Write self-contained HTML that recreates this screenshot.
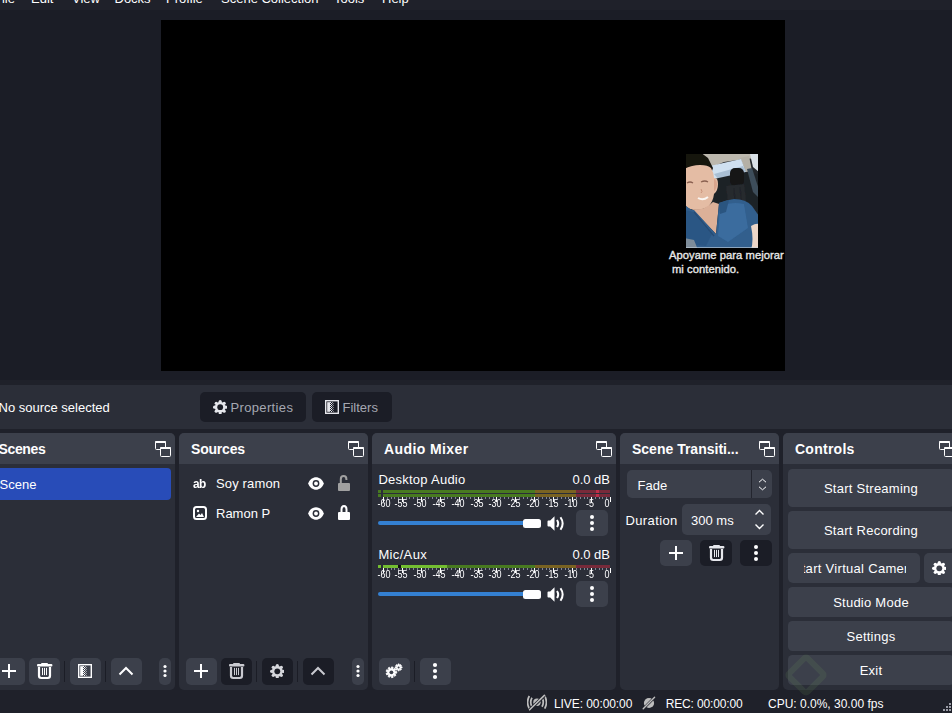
<!DOCTYPE html>
<html><head><meta charset="utf-8">
<style>
*{box-sizing:border-box;margin:0;padding:0}
html,body{width:952px;height:713px;overflow:hidden;background:#1f212a;font-family:"Liberation Sans",sans-serif;color:#fefeff;font-size:13px}
.a{position:absolute;display:block}
.t{position:absolute;white-space:pre;line-height:1}
</style></head><body>
<div class="t" style="left:-6px;top:-8px;">File</div>
<div class="t" style="left:31px;top:-8px;">Edit</div>
<div class="t" style="left:72px;top:-8px;">View</div>
<div class="t" style="left:114.5px;top:-8px;">Docks</div>
<div class="t" style="left:166px;top:-8px;">Profile</div>
<div class="t" style="left:221px;top:-8px;">Scene Collection</div>
<div class="t" style="left:334px;top:-8px;">Tools</div>
<div class="t" style="left:382px;top:-8px;">Help</div>
<div class="a" style="left:0px;top:10px;width:952px;height:370px;background:#1b1d26;"></div>
<div class="a" style="left:161px;top:20px;width:624px;height:351px;background:#000;"></div>
<svg class="a" style="left:686px;top:154px" width="72" height="95" viewBox="0 0 72 95"><defs><filter id="bl" x="-10%" y="-10%" width="120%" height="120%"><feGaussianBlur stdDeviation="0.65"/></filter><filter id="bl2" x="-20%" y="-20%" width="140%" height="140%"><feGaussianBlur stdDeviation="0.5"/></filter><clipPath id="pc"><rect x="0" y="0" width="72" height="94"/></clipPath></defs><g clip-path="url(#pc)"><rect x="0" y="0" width="72" height="94" fill="#22262a"/><g filter="url(#bl)"><path d="M8 -2H74V4L58 5L38 8L26 13L18 10Z" fill="#bcb8ae"/><path d="M54 4L63 2L66 17L60 18Z" fill="#b4b0a6"/><path d="M24 12L55 5L60 18L34 27L27 24Z" fill="#cfe0f0"/><path d="M28 20L57 12L60 18L34 27Z" fill="#a9bfd4"/><path d="M64 0H73V18L67 13Z" fill="#d9e0e6"/><path d="M28 25L60 18L73 20V80H28Z" fill="#1f2327"/><rect x="44" y="14" width="14" height="18" rx="5" fill="#141719"/><path d="M40 32L58 30L62 62L44 64Z" fill="#25292e"/><path d="M48 34L50 62M54 33L57 62" stroke="#20242a" stroke-width="1.2"/><path d="M61 15L66 14L73 36V44L67 38Z" fill="#3e4d5a"/><path d="M-2 -2H14L22 4L27 14L25 20L22 12L12 11L-2 16Z" fill="#16120e"/><path d="M-2 15Q6 11 14 11Q22 11 25 14Q28 19 28 24Q32 23 32 30Q32 37 28 40Q27 48 22 53Q14 57 4 55Q-2 52 -2 48Z" fill="#e4bca4"/><path d="M28 25Q31 26 31 31Q30 36 28 37Z" fill="#d8a48c"/><path d="M6 55Q18 57 27 48L33 50L30 80Z" fill="#dcb098"/><path d="M-2 50Q4 56 8 56L30 80L33 49Q40 46 48 45Q60 45 66 52L73 62V96H-2Z" fill="#305e8d"/><path d="M34 52Q46 47 58 50L62 74L42 88L32 82Z" fill="#3a6c9e"/><path d="M-2 56L8 58L26 80L20 92L-2 90Z" fill="#2c5784"/><path d="M33 49L43 46L40 58L34 60Z" fill="#2c5580"/><path d="M8 58L28 82" stroke="#284c74" stroke-width="1.2"/><path d="M65 72Q70 69 73 70V96H65Q68 86 65 72Z" fill="#ecd6c8"/><path d="M-2 84L8 86L12 96H-2Z" fill="#7d8c9a"/></g><g filter="url(#bl2)"><path d="M1 29Q4 27 7 29M15 28Q19 26 22 28" stroke="#8a6050" stroke-width="1.3" fill="none"/><path d="M12 44Q17 47 22 43" stroke="#fbf6f2" stroke-width="2" fill="none"/><path d="M15 35Q17 38 15 39" stroke="#c8927a" stroke-width="1" fill="none"/></g><rect x="0" y="93" width="72" height="1" fill="#c8d4e0" opacity="0.6"/></g></svg>
<div class="t" style="left:669px;top:250px;font-size:11.2px;color:#e8e8e8;-webkit-text-stroke:0.35px #e8e8e8;letter-spacing:0.05px">Apoyame para mejorar</div>
<div class="t" style="left:672px;top:263.5px;font-size:11.2px;color:#e8e8e8;-webkit-text-stroke:0.35px #e8e8e8;letter-spacing:0.05px">mi contenido.</div>
<div class="a" style="left:0px;top:385px;width:952px;height:44px;background:#2b2e38;"></div>
<div class="t" style="left:-1.5px;top:401px;">No source selected</div>
<div class="a" style="left:200px;top:392px;width:106px;height:30px;background:#1b1d26;border-radius:5px;"></div>
<div class="a" style="left:312px;top:392px;width:80px;height:30px;background:#1b1d26;border-radius:5px;"></div>
<svg class="a" style="left:212.8px;top:399.6px" width="14.4" height="14.4" viewBox="0 0 14.4 14.4"><circle cx="7.2" cy="7.2" r="5.40" fill="#e6e7ec"/><circle cx="12.82" cy="7.20" r="1.58" fill="#e6e7ec"/><circle cx="11.17" cy="11.17" r="1.58" fill="#e6e7ec"/><circle cx="7.20" cy="12.82" r="1.58" fill="#e6e7ec"/><circle cx="3.23" cy="11.17" r="1.58" fill="#e6e7ec"/><circle cx="1.58" cy="7.20" r="1.58" fill="#e6e7ec"/><circle cx="3.23" cy="3.23" r="1.58" fill="#e6e7ec"/><circle cx="7.20" cy="1.58" r="1.58" fill="#e6e7ec"/><circle cx="11.17" cy="3.23" r="1.58" fill="#e6e7ec"/><circle cx="7.2" cy="7.2" r="2.88" fill="#1b1d26"/></svg>
<div class="t" style="left:230.5px;top:401px;color:#a5a8b2;letter-spacing:0.35px">Properties</div>
<svg class="a" style="left:325px;top:400px" width="14" height="14" viewBox="0 0 14 14"><rect x="0.7" y="0.7" width="12.6" height="12.6" fill="none" stroke="#e6e7ec" stroke-width="1.4"/><rect x="2.2" y="2.2" width="2.8" height="9.6" fill="#e6e7ec"/><rect x="5" y="2" width="1" height="1" fill="#e6e7ec" opacity="1.0"/><rect x="7" y="2" width="1" height="1" fill="#e6e7ec" opacity="0.6"/><rect x="6" y="3" width="1" height="1" fill="#e6e7ec" opacity="1.0"/><rect x="8" y="3" width="1" height="1" fill="#e6e7ec" opacity="0.45"/><rect x="5" y="4" width="1" height="1" fill="#e6e7ec" opacity="1.0"/><rect x="7" y="4" width="1" height="1" fill="#e6e7ec" opacity="0.6"/><rect x="6" y="5" width="1" height="1" fill="#e6e7ec" opacity="1.0"/><rect x="8" y="5" width="1" height="1" fill="#e6e7ec" opacity="0.45"/><rect x="5" y="6" width="1" height="1" fill="#e6e7ec" opacity="1.0"/><rect x="7" y="6" width="1" height="1" fill="#e6e7ec" opacity="0.6"/><rect x="6" y="7" width="1" height="1" fill="#e6e7ec" opacity="1.0"/><rect x="8" y="7" width="1" height="1" fill="#e6e7ec" opacity="0.45"/><rect x="5" y="8" width="1" height="1" fill="#e6e7ec" opacity="1.0"/><rect x="7" y="8" width="1" height="1" fill="#e6e7ec" opacity="0.6"/><rect x="6" y="9" width="1" height="1" fill="#e6e7ec" opacity="1.0"/><rect x="8" y="9" width="1" height="1" fill="#e6e7ec" opacity="0.45"/><rect x="5" y="10" width="1" height="1" fill="#e6e7ec" opacity="1.0"/><rect x="7" y="10" width="1" height="1" fill="#e6e7ec" opacity="0.6"/><rect x="6" y="11" width="1" height="1" fill="#e6e7ec" opacity="1.0"/><rect x="8" y="11" width="1" height="1" fill="#e6e7ec" opacity="0.45"/></svg>
<div class="t" style="left:342.5px;top:401px;color:#a5a8b2;">Filters</div>
<div class="a" style="left:-12px;top:433px;width:187px;height:257px;background:#2b2e38;border-radius:5px;overflow:hidden"><div class="a" style="left:0;top:0;width:100%;height:31px;background:#3c404b"></div></div>
<div class="t" style="left:-1.5px;top:441.7px;font-size:14px;font-weight:700;letter-spacing:-0.35px">Scenes</div>
<svg class="a" style="left:155px;top:441px" width="17" height="17" viewBox="0 0 17 17"><rect x="0.5" y="0.5" width="10" height="8" rx="1" fill="none" stroke="#fefeff" stroke-width="1"/><rect x="0" y="0" width="11" height="2" rx="1" fill="#fefeff"/><rect x="5.5" y="6.5" width="10" height="9" rx="1" fill="#3c404b" stroke="#fefeff" stroke-width="1"/><rect x="5" y="6" width="11" height="2" rx="1" fill="#fefeff"/></svg>
<div class="a" style="left:179px;top:433px;width:189px;height:257px;background:#2b2e38;border-radius:5px;overflow:hidden"><div class="a" style="left:0;top:0;width:100%;height:31px;background:#3c404b"></div></div>
<div class="t" style="left:191px;top:441.7px;font-size:14px;font-weight:700;letter-spacing:-0.2px">Sources</div>
<svg class="a" style="left:348px;top:441px" width="17" height="17" viewBox="0 0 17 17"><rect x="0.5" y="0.5" width="10" height="8" rx="1" fill="none" stroke="#fefeff" stroke-width="1"/><rect x="0" y="0" width="11" height="2" rx="1" fill="#fefeff"/><rect x="5.5" y="6.5" width="10" height="9" rx="1" fill="#3c404b" stroke="#fefeff" stroke-width="1"/><rect x="5" y="6" width="11" height="2" rx="1" fill="#fefeff"/></svg>
<div class="a" style="left:372px;top:433px;width:244px;height:257px;background:#2b2e38;border-radius:5px;overflow:hidden"><div class="a" style="left:0;top:0;width:100%;height:31px;background:#3c404b"></div></div>
<div class="t" style="left:384px;top:441.7px;font-size:14px;font-weight:700;letter-spacing:0.4px">Audio Mixer</div>
<svg class="a" style="left:596px;top:441px" width="17" height="17" viewBox="0 0 17 17"><rect x="0.5" y="0.5" width="10" height="8" rx="1" fill="none" stroke="#fefeff" stroke-width="1"/><rect x="0" y="0" width="11" height="2" rx="1" fill="#fefeff"/><rect x="5.5" y="6.5" width="10" height="9" rx="1" fill="#3c404b" stroke="#fefeff" stroke-width="1"/><rect x="5" y="6" width="11" height="2" rx="1" fill="#fefeff"/></svg>
<div class="a" style="left:620px;top:433px;width:159px;height:257px;background:#2b2e38;border-radius:5px;overflow:hidden"><div class="a" style="left:0;top:0;width:100%;height:31px;background:#3c404b"></div></div>
<div class="t" style="left:632px;top:441.7px;font-size:14px;font-weight:700;letter-spacing:0px">Scene Transiti...</div>
<svg class="a" style="left:759px;top:441px" width="17" height="17" viewBox="0 0 17 17"><rect x="0.5" y="0.5" width="10" height="8" rx="1" fill="none" stroke="#fefeff" stroke-width="1"/><rect x="0" y="0" width="11" height="2" rx="1" fill="#fefeff"/><rect x="5.5" y="6.5" width="10" height="9" rx="1" fill="#3c404b" stroke="#fefeff" stroke-width="1"/><rect x="5" y="6" width="11" height="2" rx="1" fill="#fefeff"/></svg>
<div class="a" style="left:783px;top:433px;width:176px;height:257px;background:#2b2e38;border-radius:5px;overflow:hidden"><div class="a" style="left:0;top:0;width:100%;height:31px;background:#3c404b"></div></div>
<div class="t" style="left:795px;top:441.7px;font-size:14px;font-weight:700;letter-spacing:0.25px">Controls</div>
<svg class="a" style="left:939px;top:441px" width="17" height="17" viewBox="0 0 17 17"><rect x="0.5" y="0.5" width="10" height="8" rx="1" fill="none" stroke="#fefeff" stroke-width="1"/><rect x="0" y="0" width="11" height="2" rx="1" fill="#fefeff"/><rect x="5.5" y="6.5" width="10" height="9" rx="1" fill="#3c404b" stroke="#fefeff" stroke-width="1"/><rect x="5" y="6" width="11" height="2" rx="1" fill="#fefeff"/></svg>
<div class="a" style="left:-8px;top:468px;width:179px;height:32px;background:#284cb8;border-radius:4px;"></div>
<div class="t" style="left:-0.5px;top:478px;">Scene</div>
<div class="a" style="left:-6px;top:658px;width:31px;height:27px;background:#3c404b;border-radius:5px;"></div>
<svg class="a" style="left:2px;top:664px" width="14" height="14" viewBox="0 0 14 14"><path d="M7 0V14M0 7H14" stroke="#fefeff" stroke-width="2"/></svg>
<div class="a" style="left:29px;top:658px;width:31px;height:27px;background:#3c404b;border-radius:5px;"></div>
<svg class="a" style="left:37px;top:663px" width="16" height="17" viewBox="0 0 16 17"><rect x="4" y="0" width="7" height="2" rx="1" fill="#fefeff"/><rect x="0" y="1" width="15.4" height="2.4" rx="1" fill="#fefeff"/><path d="M2 4V12.8Q2 15 4.2 15H10.8Q13 15 13 12.8V4" fill="none" stroke="#fefeff" stroke-width="2.2"/><path d="M5.5 4.9V12.1M7.5 4.9V12.1M9.5 4.9V12.1" stroke="#fefeff" stroke-width="1"/></svg>
<div class="a" style="left:64px;top:661px;width:1px;height:21px;background:#1b1d26;"></div>
<div class="a" style="left:70px;top:658px;width:31px;height:27px;background:#3c404b;border-radius:5px;"></div>
<svg class="a" style="left:78px;top:664px" width="14" height="14" viewBox="0 0 14 14"><rect x="0.7" y="0.7" width="12.6" height="12.6" fill="none" stroke="#fefeff" stroke-width="1.4"/><rect x="2.2" y="2.2" width="2.8" height="9.6" fill="#fefeff"/><rect x="5" y="2" width="1" height="1" fill="#fefeff" opacity="1.0"/><rect x="7" y="2" width="1" height="1" fill="#fefeff" opacity="0.6"/><rect x="6" y="3" width="1" height="1" fill="#fefeff" opacity="1.0"/><rect x="8" y="3" width="1" height="1" fill="#fefeff" opacity="0.45"/><rect x="5" y="4" width="1" height="1" fill="#fefeff" opacity="1.0"/><rect x="7" y="4" width="1" height="1" fill="#fefeff" opacity="0.6"/><rect x="6" y="5" width="1" height="1" fill="#fefeff" opacity="1.0"/><rect x="8" y="5" width="1" height="1" fill="#fefeff" opacity="0.45"/><rect x="5" y="6" width="1" height="1" fill="#fefeff" opacity="1.0"/><rect x="7" y="6" width="1" height="1" fill="#fefeff" opacity="0.6"/><rect x="6" y="7" width="1" height="1" fill="#fefeff" opacity="1.0"/><rect x="8" y="7" width="1" height="1" fill="#fefeff" opacity="0.45"/><rect x="5" y="8" width="1" height="1" fill="#fefeff" opacity="1.0"/><rect x="7" y="8" width="1" height="1" fill="#fefeff" opacity="0.6"/><rect x="6" y="9" width="1" height="1" fill="#fefeff" opacity="1.0"/><rect x="8" y="9" width="1" height="1" fill="#fefeff" opacity="0.45"/><rect x="5" y="10" width="1" height="1" fill="#fefeff" opacity="1.0"/><rect x="7" y="10" width="1" height="1" fill="#fefeff" opacity="0.6"/><rect x="6" y="11" width="1" height="1" fill="#fefeff" opacity="1.0"/><rect x="8" y="11" width="1" height="1" fill="#fefeff" opacity="0.45"/></svg>
<div class="a" style="left:105px;top:661px;width:1px;height:21px;background:#1b1d26;"></div>
<div class="a" style="left:111px;top:658px;width:31px;height:27px;background:#3c404b;border-radius:5px;"></div>
<svg class="a" style="left:118px;top:666px" width="16" height="10" viewBox="0 0 16 10"><path d="M1.5 8.5L8 2L14.5 8.5" fill="none" stroke="#fefeff" stroke-width="2"/></svg>
<div class="a" style="left:159px;top:658px;width:12px;height:27px;background:#3c404b;border-radius:5px;"></div>
<svg class="a" style="left:161px;top:661px" width="8" height="20" viewBox="0 0 8 20"><circle cx="4" cy="5.5" r="1.6" fill="#fefeff"/><circle cx="4" cy="10.0" r="1.6" fill="#fefeff"/><circle cx="4" cy="14.5" r="1.6" fill="#fefeff"/></svg>
<div class="t" style="left:192.6px;top:477.6px;font-size:12.5px;font-weight:700;letter-spacing:-0.6px;transform:scaleX(0.95);transform-origin:0 0">ab</div>
<div class="t" style="left:216px;top:477px;letter-spacing:0.15px">Soy ramon</div>
<svg class="a" style="left:308px;top:476.5px" width="16" height="13" viewBox="0 0 16 13"><path d="M0.2 6.5C3 -1.8 13 -1.8 15.8 6.5C13 14.8 3 14.8 0.2 6.5Z" fill="#fefeff"/><circle cx="8" cy="6.5" r="3.4" fill="#2b2e38"/><circle cx="8" cy="6.5" r="1.9" fill="#fefeff"/></svg>
<svg class="a" style="left:338px;top:475px" width="12" height="16" viewBox="0 0 12 16"><path d="M2.8 8V4.2Q2.8 1 5.6 1Q8.4 1 8.4 4.2V5" fill="none" stroke="#a0a0a0" stroke-width="2"/><rect x="0" y="8" width="12" height="8" rx="1" fill="#a0a0a0"/></svg>
<svg class="a" style="left:193px;top:506px" width="14" height="14" viewBox="0 0 14 14"><rect x="1" y="1" width="12" height="12" rx="2.5" fill="none" stroke="#fefeff" stroke-width="2"/><circle cx="5" cy="5" r="1.2" fill="#fefeff"/><path d="M3 11L6 7.5L7.5 9L9 7L11 11Z" fill="#fefeff"/></svg>
<div class="t" style="left:216px;top:507px;">Ramon P</div>
<svg class="a" style="left:308px;top:506.5px" width="16" height="13" viewBox="0 0 16 13"><path d="M0.2 6.5C3 -1.8 13 -1.8 15.8 6.5C13 14.8 3 14.8 0.2 6.5Z" fill="#fefeff"/><circle cx="8" cy="6.5" r="3.4" fill="#2b2e38"/><circle cx="8" cy="6.5" r="1.9" fill="#fefeff"/></svg>
<svg class="a" style="left:338px;top:505px" width="12" height="16" viewBox="0 0 12 16"><path d="M3.5 7V4.5Q3.5 1 6 1Q8.5 1 8.5 4.5V7" fill="none" stroke="#fefeff" stroke-width="2"/><rect x="0" y="7" width="12" height="8" rx="1" fill="#fefeff"/></svg>
<div class="a" style="left:186px;top:658px;width:31px;height:27px;background:#3c404b;border-radius:5px;"></div>
<svg class="a" style="left:194px;top:664px" width="14" height="14" viewBox="0 0 14 14"><path d="M7 0V14M0 7H14" stroke="#fefeff" stroke-width="2"/></svg>
<div class="a" style="left:221px;top:658px;width:31px;height:27px;background:#1b1d26;border-radius:5px;"></div>
<svg class="a" style="left:229px;top:663px" width="16" height="17" viewBox="0 0 16 17"><rect x="4" y="0" width="7" height="2" rx="1" fill="#c9cad0"/><rect x="0" y="1" width="15.4" height="2.4" rx="1" fill="#c9cad0"/><path d="M2 4V12.8Q2 15 4.2 15H10.8Q13 15 13 12.8V4" fill="none" stroke="#c9cad0" stroke-width="2.2"/><path d="M5.5 4.9V12.1M7.5 4.9V12.1M9.5 4.9V12.1" stroke="#c9cad0" stroke-width="1"/></svg>
<div class="a" style="left:256px;top:661px;width:1px;height:21px;background:#1b1d26;"></div>
<div class="a" style="left:262px;top:658px;width:31px;height:27px;background:#1b1d26;border-radius:5px;"></div>
<svg class="a" style="left:269.7px;top:663.7px" width="14.6" height="14.6" viewBox="0 0 14.6 14.6"><circle cx="7.3" cy="7.3" r="5.47" fill="#d6d7dc"/><circle cx="12.99" cy="7.30" r="1.61" fill="#d6d7dc"/><circle cx="11.33" cy="11.33" r="1.61" fill="#d6d7dc"/><circle cx="7.30" cy="12.99" r="1.61" fill="#d6d7dc"/><circle cx="3.27" cy="11.33" r="1.61" fill="#d6d7dc"/><circle cx="1.61" cy="7.30" r="1.61" fill="#d6d7dc"/><circle cx="3.27" cy="3.27" r="1.61" fill="#d6d7dc"/><circle cx="7.30" cy="1.61" r="1.61" fill="#d6d7dc"/><circle cx="11.33" cy="3.27" r="1.61" fill="#d6d7dc"/><circle cx="7.3" cy="7.3" r="2.92" fill="#1b1d26"/></svg>
<div class="a" style="left:297px;top:661px;width:1px;height:21px;background:#1b1d26;"></div>
<div class="a" style="left:303px;top:658px;width:31px;height:27px;background:#1b1d26;border-radius:5px;"></div>
<svg class="a" style="left:310px;top:666px" width="16" height="10" viewBox="0 0 16 10"><path d="M1.5 8.5L8 2L14.5 8.5" fill="none" stroke="#c9cad0" stroke-width="2"/></svg>
<div class="a" style="left:352px;top:658px;width:12px;height:27px;background:#3c404b;border-radius:5px;"></div>
<svg class="a" style="left:354px;top:661px" width="8" height="20" viewBox="0 0 8 20"><circle cx="4" cy="5.5" r="1.6" fill="#fefeff"/><circle cx="4" cy="10.0" r="1.6" fill="#fefeff"/><circle cx="4" cy="14.5" r="1.6" fill="#fefeff"/></svg>
<div class="t" style="left:378.4px;top:473px;letter-spacing:0.25px">Desktop Audio</div>
<div class="t" style="left:510px;top:473px;width:100px;text-align:right">0.0 dB</div>
<div class="a" style="left:378px;top:490px;width:3px;height:3px;background:#487a20;"></div>
<div class="a" style="left:383px;top:490px;width:152px;height:3px;background:#487a20;"></div>
<div class="a" style="left:535px;top:490px;width:41px;height:3px;background:#7a6322;"></div>
<div class="a" style="left:576px;top:490px;width:34px;height:3px;background:#782a3a;"></div>
<div class="a" style="left:596px;top:490px;width:3px;height:3px;background:#bd2f49;"></div>
<div class="a" style="left:378px;top:494px;width:3px;height:3px;background:#487a20;"></div>
<div class="a" style="left:383px;top:494px;width:152px;height:3px;background:#487a20;"></div>
<div class="a" style="left:535px;top:494px;width:41px;height:3px;background:#7a6322;"></div>
<div class="a" style="left:576px;top:494px;width:34px;height:3px;background:#782a3a;"></div>
<div class="a" style="left:596px;top:494px;width:3px;height:3px;background:#bd2f49;"></div>
<div class="a" style="left:383px;top:497px;width:1px;height:2px;background:#85889a;"></div>
<div class="a" style="left:387px;top:497px;width:1px;height:2px;background:#85889a;"></div>
<div class="a" style="left:391px;top:497px;width:1px;height:2px;background:#85889a;"></div>
<div class="a" style="left:394px;top:497px;width:1px;height:2px;background:#85889a;"></div>
<div class="a" style="left:398px;top:497px;width:1px;height:2px;background:#85889a;"></div>
<div class="a" style="left:402px;top:497px;width:1px;height:2px;background:#85889a;"></div>
<div class="a" style="left:406px;top:497px;width:1px;height:2px;background:#85889a;"></div>
<div class="a" style="left:409px;top:497px;width:1px;height:2px;background:#85889a;"></div>
<div class="a" style="left:413px;top:497px;width:1px;height:2px;background:#85889a;"></div>
<div class="a" style="left:417px;top:497px;width:1px;height:2px;background:#85889a;"></div>
<div class="a" style="left:421px;top:497px;width:1px;height:2px;background:#85889a;"></div>
<div class="a" style="left:425px;top:497px;width:1px;height:2px;background:#85889a;"></div>
<div class="a" style="left:428px;top:497px;width:1px;height:2px;background:#85889a;"></div>
<div class="a" style="left:432px;top:497px;width:1px;height:2px;background:#85889a;"></div>
<div class="a" style="left:436px;top:497px;width:1px;height:2px;background:#85889a;"></div>
<div class="a" style="left:440px;top:497px;width:1px;height:2px;background:#85889a;"></div>
<div class="a" style="left:444px;top:497px;width:1px;height:2px;background:#85889a;"></div>
<div class="a" style="left:447px;top:497px;width:1px;height:2px;background:#85889a;"></div>
<div class="a" style="left:451px;top:497px;width:1px;height:2px;background:#85889a;"></div>
<div class="a" style="left:455px;top:497px;width:1px;height:2px;background:#85889a;"></div>
<div class="a" style="left:459px;top:497px;width:1px;height:2px;background:#85889a;"></div>
<div class="a" style="left:462px;top:497px;width:1px;height:2px;background:#85889a;"></div>
<div class="a" style="left:466px;top:497px;width:1px;height:2px;background:#85889a;"></div>
<div class="a" style="left:470px;top:497px;width:1px;height:2px;background:#85889a;"></div>
<div class="a" style="left:474px;top:497px;width:1px;height:2px;background:#85889a;"></div>
<div class="a" style="left:478px;top:497px;width:1px;height:2px;background:#85889a;"></div>
<div class="a" style="left:481px;top:497px;width:1px;height:2px;background:#85889a;"></div>
<div class="a" style="left:485px;top:497px;width:1px;height:2px;background:#85889a;"></div>
<div class="a" style="left:489px;top:497px;width:1px;height:2px;background:#85889a;"></div>
<div class="a" style="left:493px;top:497px;width:1px;height:2px;background:#85889a;"></div>
<div class="a" style="left:496px;top:497px;width:1px;height:2px;background:#85889a;"></div>
<div class="a" style="left:500px;top:497px;width:1px;height:2px;background:#85889a;"></div>
<div class="a" style="left:504px;top:497px;width:1px;height:2px;background:#85889a;"></div>
<div class="a" style="left:508px;top:497px;width:1px;height:2px;background:#85889a;"></div>
<div class="a" style="left:512px;top:497px;width:1px;height:2px;background:#85889a;"></div>
<div class="a" style="left:515px;top:497px;width:1px;height:2px;background:#85889a;"></div>
<div class="a" style="left:519px;top:497px;width:1px;height:2px;background:#85889a;"></div>
<div class="a" style="left:523px;top:497px;width:1px;height:2px;background:#85889a;"></div>
<div class="a" style="left:527px;top:497px;width:1px;height:2px;background:#85889a;"></div>
<div class="a" style="left:531px;top:497px;width:1px;height:2px;background:#85889a;"></div>
<div class="a" style="left:534px;top:497px;width:1px;height:2px;background:#85889a;"></div>
<div class="a" style="left:538px;top:497px;width:1px;height:2px;background:#85889a;"></div>
<div class="a" style="left:542px;top:497px;width:1px;height:2px;background:#85889a;"></div>
<div class="a" style="left:546px;top:497px;width:1px;height:2px;background:#85889a;"></div>
<div class="a" style="left:549px;top:497px;width:1px;height:2px;background:#85889a;"></div>
<div class="a" style="left:553px;top:497px;width:1px;height:2px;background:#85889a;"></div>
<div class="a" style="left:557px;top:497px;width:1px;height:2px;background:#85889a;"></div>
<div class="a" style="left:561px;top:497px;width:1px;height:2px;background:#85889a;"></div>
<div class="a" style="left:565px;top:497px;width:1px;height:2px;background:#85889a;"></div>
<div class="a" style="left:568px;top:497px;width:1px;height:2px;background:#85889a;"></div>
<div class="a" style="left:572px;top:497px;width:1px;height:2px;background:#85889a;"></div>
<div class="a" style="left:576px;top:497px;width:1px;height:2px;background:#85889a;"></div>
<div class="a" style="left:580px;top:497px;width:1px;height:2px;background:#85889a;"></div>
<div class="a" style="left:584px;top:497px;width:1px;height:2px;background:#85889a;"></div>
<div class="a" style="left:587px;top:497px;width:1px;height:2px;background:#85889a;"></div>
<div class="a" style="left:591px;top:497px;width:1px;height:2px;background:#85889a;"></div>
<div class="a" style="left:595px;top:497px;width:1px;height:2px;background:#85889a;"></div>
<div class="a" style="left:599px;top:497px;width:1px;height:2px;background:#85889a;"></div>
<div class="a" style="left:602px;top:497px;width:1px;height:2px;background:#85889a;"></div>
<div class="a" style="left:606px;top:497px;width:1px;height:2px;background:#85889a;"></div>
<div class="a" style="left:610px;top:497px;width:1px;height:2px;background:#85889a;"></div>
<div class="a" style="left:383px;top:497px;width:1px;height:5px;background:#fefeff;"></div>
<div class="t" style="left:373.8px;top:499px;width:20px;text-align:center;font-size:10px;transform:scaleX(0.9)">-60</div>
<div class="a" style="left:402px;top:497px;width:1px;height:5px;background:#fefeff;"></div>
<div class="t" style="left:391.4px;top:499px;width:20px;text-align:center;font-size:10px;transform:scaleX(0.9)">-55</div>
<div class="a" style="left:421px;top:497px;width:1px;height:5px;background:#fefeff;"></div>
<div class="t" style="left:410.4px;top:499px;width:20px;text-align:center;font-size:10px;transform:scaleX(0.9)">-50</div>
<div class="a" style="left:440px;top:497px;width:1px;height:5px;background:#fefeff;"></div>
<div class="t" style="left:429.4px;top:499px;width:20px;text-align:center;font-size:10px;transform:scaleX(0.9)">-45</div>
<div class="a" style="left:459px;top:497px;width:1px;height:5px;background:#fefeff;"></div>
<div class="t" style="left:448.4px;top:499px;width:20px;text-align:center;font-size:10px;transform:scaleX(0.9)">-40</div>
<div class="a" style="left:478px;top:497px;width:1px;height:5px;background:#fefeff;"></div>
<div class="t" style="left:467.4px;top:499px;width:20px;text-align:center;font-size:10px;transform:scaleX(0.9)">-35</div>
<div class="a" style="left:496px;top:497px;width:1px;height:5px;background:#fefeff;"></div>
<div class="t" style="left:485.4px;top:499px;width:20px;text-align:center;font-size:10px;transform:scaleX(0.9)">-30</div>
<div class="a" style="left:515px;top:497px;width:1px;height:5px;background:#fefeff;"></div>
<div class="t" style="left:504.4px;top:499px;width:20px;text-align:center;font-size:10px;transform:scaleX(0.9)">-25</div>
<div class="a" style="left:534px;top:497px;width:1px;height:5px;background:#fefeff;"></div>
<div class="t" style="left:523.4px;top:499px;width:20px;text-align:center;font-size:10px;transform:scaleX(0.9)">-20</div>
<div class="a" style="left:553px;top:497px;width:1px;height:5px;background:#fefeff;"></div>
<div class="t" style="left:542.4px;top:499px;width:20px;text-align:center;font-size:10px;transform:scaleX(0.9)">-15</div>
<div class="a" style="left:572px;top:497px;width:1px;height:5px;background:#fefeff;"></div>
<div class="t" style="left:561.4px;top:499px;width:20px;text-align:center;font-size:10px;transform:scaleX(0.9)">-10</div>
<div class="a" style="left:591px;top:497px;width:1px;height:5px;background:#fefeff;"></div>
<div class="t" style="left:580.4px;top:499px;width:20px;text-align:center;font-size:10px;transform:scaleX(0.9)">-5</div>
<div class="a" style="left:610px;top:497px;width:1px;height:5px;background:#fefeff;"></div>
<div class="t" style="left:596.5px;top:499px;width:20px;text-align:center;font-size:10px;transform:scaleX(0.9)">0</div>
<div class="a" style="left:378px;top:521px;width:150px;height:4px;background:#3480d2;border-radius:2px;"></div>
<div class="a" style="left:523px;top:518.5px;width:18px;height:9px;background:#fefeff;border-radius:2.5px;"></div>
<svg class="a" style="left:546.5px;top:515.8px" width="18" height="16" viewBox="0 0 18 16"><path d="M0.5 5.4Q0.5 4.5 1.4 4.5H3.2L7.5 0.3V14.7L3.2 10.5H1.4Q0.5 10.5 0.5 9.6Z" fill="#fefeff"/><path d="M10 4Q12.3 7.5 10 11" fill="none" stroke="#fefeff" stroke-width="2"/><path d="M13.5 1.3Q17.8 7.5 13.5 13.7" fill="none" stroke="#fefeff" stroke-width="2"/></svg>
<div class="a" style="left:576px;top:510px;width:32px;height:26px;background:#3c404b;border-radius:5px;"></div>
<svg class="a" style="left:588px;top:513px" width="8" height="20" viewBox="0 0 8 20"><circle cx="4" cy="4" r="2" fill="#fefeff"/><circle cx="4" cy="10" r="2" fill="#fefeff"/><circle cx="4" cy="16" r="2" fill="#fefeff"/></svg>
<div class="t" style="left:378.4px;top:548px;letter-spacing:0.35px">Mic/Aux</div>
<div class="t" style="left:510px;top:548px;width:100px;text-align:right">0.0 dB</div>
<div class="a" style="left:378px;top:565px;width:3px;height:3px;background:#487a20;"></div>
<div class="a" style="left:383px;top:565px;width:152px;height:3px;background:#487a20;"></div>
<div class="a" style="left:535px;top:565px;width:41px;height:3px;background:#7a6322;"></div>
<div class="a" style="left:576px;top:565px;width:34px;height:3px;background:#782a3a;"></div>
<div class="a" style="left:383px;top:565px;width:64px;height:3px;background:#73bd31;"></div>
<div class="a" style="left:378px;top:565px;width:3px;height:3px;background:#73bd31;"></div>
<div class="a" style="left:398px;top:565px;width:3px;height:3px;background:#111;"></div>
<div class="a" style="left:383px;top:568px;width:1px;height:2px;background:#85889a;"></div>
<div class="a" style="left:387px;top:568px;width:1px;height:2px;background:#85889a;"></div>
<div class="a" style="left:391px;top:568px;width:1px;height:2px;background:#85889a;"></div>
<div class="a" style="left:394px;top:568px;width:1px;height:2px;background:#85889a;"></div>
<div class="a" style="left:398px;top:568px;width:1px;height:2px;background:#85889a;"></div>
<div class="a" style="left:402px;top:568px;width:1px;height:2px;background:#85889a;"></div>
<div class="a" style="left:406px;top:568px;width:1px;height:2px;background:#85889a;"></div>
<div class="a" style="left:409px;top:568px;width:1px;height:2px;background:#85889a;"></div>
<div class="a" style="left:413px;top:568px;width:1px;height:2px;background:#85889a;"></div>
<div class="a" style="left:417px;top:568px;width:1px;height:2px;background:#85889a;"></div>
<div class="a" style="left:421px;top:568px;width:1px;height:2px;background:#85889a;"></div>
<div class="a" style="left:425px;top:568px;width:1px;height:2px;background:#85889a;"></div>
<div class="a" style="left:428px;top:568px;width:1px;height:2px;background:#85889a;"></div>
<div class="a" style="left:432px;top:568px;width:1px;height:2px;background:#85889a;"></div>
<div class="a" style="left:436px;top:568px;width:1px;height:2px;background:#85889a;"></div>
<div class="a" style="left:440px;top:568px;width:1px;height:2px;background:#85889a;"></div>
<div class="a" style="left:444px;top:568px;width:1px;height:2px;background:#85889a;"></div>
<div class="a" style="left:447px;top:568px;width:1px;height:2px;background:#85889a;"></div>
<div class="a" style="left:451px;top:568px;width:1px;height:2px;background:#85889a;"></div>
<div class="a" style="left:455px;top:568px;width:1px;height:2px;background:#85889a;"></div>
<div class="a" style="left:459px;top:568px;width:1px;height:2px;background:#85889a;"></div>
<div class="a" style="left:462px;top:568px;width:1px;height:2px;background:#85889a;"></div>
<div class="a" style="left:466px;top:568px;width:1px;height:2px;background:#85889a;"></div>
<div class="a" style="left:470px;top:568px;width:1px;height:2px;background:#85889a;"></div>
<div class="a" style="left:474px;top:568px;width:1px;height:2px;background:#85889a;"></div>
<div class="a" style="left:478px;top:568px;width:1px;height:2px;background:#85889a;"></div>
<div class="a" style="left:481px;top:568px;width:1px;height:2px;background:#85889a;"></div>
<div class="a" style="left:485px;top:568px;width:1px;height:2px;background:#85889a;"></div>
<div class="a" style="left:489px;top:568px;width:1px;height:2px;background:#85889a;"></div>
<div class="a" style="left:493px;top:568px;width:1px;height:2px;background:#85889a;"></div>
<div class="a" style="left:496px;top:568px;width:1px;height:2px;background:#85889a;"></div>
<div class="a" style="left:500px;top:568px;width:1px;height:2px;background:#85889a;"></div>
<div class="a" style="left:504px;top:568px;width:1px;height:2px;background:#85889a;"></div>
<div class="a" style="left:508px;top:568px;width:1px;height:2px;background:#85889a;"></div>
<div class="a" style="left:512px;top:568px;width:1px;height:2px;background:#85889a;"></div>
<div class="a" style="left:515px;top:568px;width:1px;height:2px;background:#85889a;"></div>
<div class="a" style="left:519px;top:568px;width:1px;height:2px;background:#85889a;"></div>
<div class="a" style="left:523px;top:568px;width:1px;height:2px;background:#85889a;"></div>
<div class="a" style="left:527px;top:568px;width:1px;height:2px;background:#85889a;"></div>
<div class="a" style="left:531px;top:568px;width:1px;height:2px;background:#85889a;"></div>
<div class="a" style="left:534px;top:568px;width:1px;height:2px;background:#85889a;"></div>
<div class="a" style="left:538px;top:568px;width:1px;height:2px;background:#85889a;"></div>
<div class="a" style="left:542px;top:568px;width:1px;height:2px;background:#85889a;"></div>
<div class="a" style="left:546px;top:568px;width:1px;height:2px;background:#85889a;"></div>
<div class="a" style="left:549px;top:568px;width:1px;height:2px;background:#85889a;"></div>
<div class="a" style="left:553px;top:568px;width:1px;height:2px;background:#85889a;"></div>
<div class="a" style="left:557px;top:568px;width:1px;height:2px;background:#85889a;"></div>
<div class="a" style="left:561px;top:568px;width:1px;height:2px;background:#85889a;"></div>
<div class="a" style="left:565px;top:568px;width:1px;height:2px;background:#85889a;"></div>
<div class="a" style="left:568px;top:568px;width:1px;height:2px;background:#85889a;"></div>
<div class="a" style="left:572px;top:568px;width:1px;height:2px;background:#85889a;"></div>
<div class="a" style="left:576px;top:568px;width:1px;height:2px;background:#85889a;"></div>
<div class="a" style="left:580px;top:568px;width:1px;height:2px;background:#85889a;"></div>
<div class="a" style="left:584px;top:568px;width:1px;height:2px;background:#85889a;"></div>
<div class="a" style="left:587px;top:568px;width:1px;height:2px;background:#85889a;"></div>
<div class="a" style="left:591px;top:568px;width:1px;height:2px;background:#85889a;"></div>
<div class="a" style="left:595px;top:568px;width:1px;height:2px;background:#85889a;"></div>
<div class="a" style="left:599px;top:568px;width:1px;height:2px;background:#85889a;"></div>
<div class="a" style="left:602px;top:568px;width:1px;height:2px;background:#85889a;"></div>
<div class="a" style="left:606px;top:568px;width:1px;height:2px;background:#85889a;"></div>
<div class="a" style="left:610px;top:568px;width:1px;height:2px;background:#85889a;"></div>
<div class="a" style="left:383px;top:568px;width:1px;height:5px;background:#fefeff;"></div>
<div class="t" style="left:373.8px;top:570px;width:20px;text-align:center;font-size:10px;transform:scaleX(0.9)">-60</div>
<div class="a" style="left:402px;top:568px;width:1px;height:5px;background:#fefeff;"></div>
<div class="t" style="left:391.4px;top:570px;width:20px;text-align:center;font-size:10px;transform:scaleX(0.9)">-55</div>
<div class="a" style="left:421px;top:568px;width:1px;height:5px;background:#fefeff;"></div>
<div class="t" style="left:410.4px;top:570px;width:20px;text-align:center;font-size:10px;transform:scaleX(0.9)">-50</div>
<div class="a" style="left:440px;top:568px;width:1px;height:5px;background:#fefeff;"></div>
<div class="t" style="left:429.4px;top:570px;width:20px;text-align:center;font-size:10px;transform:scaleX(0.9)">-45</div>
<div class="a" style="left:459px;top:568px;width:1px;height:5px;background:#fefeff;"></div>
<div class="t" style="left:448.4px;top:570px;width:20px;text-align:center;font-size:10px;transform:scaleX(0.9)">-40</div>
<div class="a" style="left:478px;top:568px;width:1px;height:5px;background:#fefeff;"></div>
<div class="t" style="left:467.4px;top:570px;width:20px;text-align:center;font-size:10px;transform:scaleX(0.9)">-35</div>
<div class="a" style="left:496px;top:568px;width:1px;height:5px;background:#fefeff;"></div>
<div class="t" style="left:485.4px;top:570px;width:20px;text-align:center;font-size:10px;transform:scaleX(0.9)">-30</div>
<div class="a" style="left:515px;top:568px;width:1px;height:5px;background:#fefeff;"></div>
<div class="t" style="left:504.4px;top:570px;width:20px;text-align:center;font-size:10px;transform:scaleX(0.9)">-25</div>
<div class="a" style="left:534px;top:568px;width:1px;height:5px;background:#fefeff;"></div>
<div class="t" style="left:523.4px;top:570px;width:20px;text-align:center;font-size:10px;transform:scaleX(0.9)">-20</div>
<div class="a" style="left:553px;top:568px;width:1px;height:5px;background:#fefeff;"></div>
<div class="t" style="left:542.4px;top:570px;width:20px;text-align:center;font-size:10px;transform:scaleX(0.9)">-15</div>
<div class="a" style="left:572px;top:568px;width:1px;height:5px;background:#fefeff;"></div>
<div class="t" style="left:561.4px;top:570px;width:20px;text-align:center;font-size:10px;transform:scaleX(0.9)">-10</div>
<div class="a" style="left:591px;top:568px;width:1px;height:5px;background:#fefeff;"></div>
<div class="t" style="left:580.4px;top:570px;width:20px;text-align:center;font-size:10px;transform:scaleX(0.9)">-5</div>
<div class="a" style="left:610px;top:568px;width:1px;height:5px;background:#fefeff;"></div>
<div class="t" style="left:596.5px;top:570px;width:20px;text-align:center;font-size:10px;transform:scaleX(0.9)">0</div>
<div class="a" style="left:378px;top:592px;width:150px;height:4px;background:#3480d2;border-radius:2px;"></div>
<div class="a" style="left:523px;top:589.5px;width:18px;height:9px;background:#fefeff;border-radius:2.5px;"></div>
<svg class="a" style="left:546.5px;top:586.8px" width="18" height="16" viewBox="0 0 18 16"><path d="M0.5 5.4Q0.5 4.5 1.4 4.5H3.2L7.5 0.3V14.7L3.2 10.5H1.4Q0.5 10.5 0.5 9.6Z" fill="#fefeff"/><path d="M10 4Q12.3 7.5 10 11" fill="none" stroke="#fefeff" stroke-width="2"/><path d="M13.5 1.3Q17.8 7.5 13.5 13.7" fill="none" stroke="#fefeff" stroke-width="2"/></svg>
<div class="a" style="left:576px;top:581px;width:32px;height:26px;background:#3c404b;border-radius:5px;"></div>
<svg class="a" style="left:588px;top:584px" width="8" height="20" viewBox="0 0 8 20"><circle cx="4" cy="4" r="2" fill="#fefeff"/><circle cx="4" cy="10" r="2" fill="#fefeff"/><circle cx="4" cy="16" r="2" fill="#fefeff"/></svg>
<div class="a" style="left:379px;top:658px;width:31px;height:27px;background:#3c404b;border-radius:5px;"></div>
<svg class="a" style="left:385px;top:662px" width="18" height="17" viewBox="0 0 18 17"><path d="M10.09 9.40 L11.74 9.47 L11.74 11.13 L10.09 11.20 L9.81 11.98 L11.02 13.10 L9.96 14.36 L8.65 13.36 L7.93 13.78 L8.14 15.41 L6.51 15.70 L6.15 14.09 L5.34 13.95 L4.45 15.33 L3.02 14.51 L3.77 13.04 L3.24 12.41 L1.67 12.90 L1.10 11.35 L2.62 10.71 L2.62 9.89 L1.10 9.25 L1.67 7.70 L3.24 8.19 L3.77 7.56 L3.02 6.09 L4.45 5.27 L5.34 6.65 L6.15 6.51 L6.51 4.90 L8.14 5.19 L7.93 6.82 L8.65 7.24 L9.96 6.24 L11.02 7.50 L9.81 8.62Z" fill="#fefeff" stroke="#fefeff" stroke-width="0.8" stroke-linejoin="round"/><circle cx="6.4" cy="10.3" r="1.9" fill="#3c404b"/><path d="M15.91 4.76 L17.05 4.80 L17.05 6.00 L15.91 6.04 L15.69 6.58 L16.46 7.41 L15.61 8.26 L14.78 7.49 L14.24 7.71 L14.20 8.85 L13.00 8.85 L12.96 7.71 L12.42 7.49 L11.59 8.26 L10.74 7.41 L11.51 6.58 L11.29 6.04 L10.15 6.00 L10.15 4.80 L11.29 4.76 L11.51 4.22 L10.74 3.39 L11.59 2.54 L12.42 3.31 L12.96 3.09 L13.00 1.95 L14.20 1.95 L14.24 3.09 L14.78 3.31 L15.61 2.54 L16.46 3.39 L15.69 4.22Z" fill="#fefeff" stroke="#fefeff" stroke-width="0.8" stroke-linejoin="round"/><circle cx="13.6" cy="5.4" r="1.0" fill="#3c404b"/></svg>
<div class="a" style="left:414px;top:661px;width:1px;height:21px;background:#1b1d26;"></div>
<div class="a" style="left:420px;top:658px;width:31px;height:27px;background:#3c404b;border-radius:5px;"></div>
<svg class="a" style="left:431px;top:661px" width="8" height="20" viewBox="0 0 8 20"><circle cx="4" cy="4" r="2.1" fill="#fefeff"/><circle cx="4" cy="10" r="2.1" fill="#fefeff"/><circle cx="4" cy="16" r="2.1" fill="#fefeff"/></svg>
<div class="a" style="left:627px;top:469.5px;width:145px;height:28px;background:#3c404b;border-radius:5px;"></div>
<div class="a" style="left:751px;top:469.5px;width:1.2px;height:28px;background:#23252e;"></div>
<div class="t" style="left:637.6px;top:478.5px;">Fade</div>
<svg class="a" style="left:757.5px;top:478px" width="9" height="13" viewBox="0 0 9 13"><path d="M1 4.2L4.5 1.2L8 4.2M1 8.8L4.5 11.8L8 8.8" fill="none" stroke="#fefeff" stroke-width="1"/></svg>
<div class="t" style="left:625.4px;top:514px;letter-spacing:0.4px">Duration</div>
<div class="a" style="left:682px;top:504px;width:89px;height:30.5px;background:#3c404b;border-radius:5px;"></div>
<div class="t" style="left:691px;top:514px;">300 ms</div>
<svg class="a" style="left:754px;top:509px" width="11" height="21" viewBox="0 0 11 21"><path d="M1.5 5.5L5.5 1.5L9.5 5.5M1.5 15.5L5.5 19.5L9.5 15.5" fill="none" stroke="#fefeff" stroke-width="1.4"/></svg>
<div class="a" style="left:660px;top:540px;width:32px;height:26px;background:#3c404b;border-radius:5px;"></div>
<svg class="a" style="left:669px;top:546px" width="14" height="14" viewBox="0 0 14 14"><path d="M7 0V14M0 7H14" stroke="#fefeff" stroke-width="2"/></svg>
<div class="a" style="left:700px;top:540px;width:32px;height:26px;background:#1b1d26;border-radius:5px;"></div>
<svg class="a" style="left:708.5px;top:545px" width="16" height="17" viewBox="0 0 16 17"><rect x="4" y="0" width="7" height="2" rx="1" fill="#e6e7ec"/><rect x="0" y="1" width="15.4" height="2.4" rx="1" fill="#e6e7ec"/><path d="M2 4V12.8Q2 15 4.2 15H10.8Q13 15 13 12.8V4" fill="none" stroke="#e6e7ec" stroke-width="2.2"/><path d="M5.5 4.9V12.1M7.5 4.9V12.1M9.5 4.9V12.1" stroke="#e6e7ec" stroke-width="1"/></svg>
<div class="a" style="left:740px;top:540px;width:32px;height:26px;background:#1b1d26;border-radius:5px;"></div>
<svg class="a" style="left:752px;top:543px" width="8" height="20" viewBox="0 0 8 20"><circle cx="4" cy="4" r="2.0" fill="#fefeff"/><circle cx="4" cy="10" r="2.0" fill="#fefeff"/><circle cx="4" cy="16" r="2.0" fill="#fefeff"/></svg>
<div class="a" style="left:788px;top:469px;width:166px;height:38px;background:#3c404b;border-radius:4.5px;"></div>
<div class="t" style="left:788px;top:481.6px;width:166px;text-align:center;letter-spacing:0.25px">Start Streaming</div>
<div class="a" style="left:788px;top:511px;width:166px;height:38px;background:#3c404b;border-radius:4.5px;"></div>
<div class="t" style="left:788px;top:523.6px;width:166px;text-align:center;letter-spacing:0.25px">Start Recording</div>
<div class="a" style="left:788px;top:553px;width:132px;height:30px;background:#3c404b;border-radius:5px;"></div>
<div class="a" style="left:803.5px;top:553px;width:102.5px;height:30px;overflow:hidden"><div class="t" style="left:51px;top:8.6px;transform:translateX(-50%);letter-spacing:0.3px">Start Virtual Camera</div></div>
<div class="a" style="left:924px;top:553px;width:35px;height:30px;background:#3c404b;border-radius:5px;"></div>
<svg class="a" style="left:931.7px;top:560.7px" width="14.6" height="14.6" viewBox="0 0 14.6 14.6"><circle cx="7.3" cy="7.3" r="5.47" fill="#fefeff"/><circle cx="12.99" cy="7.30" r="1.61" fill="#fefeff"/><circle cx="11.33" cy="11.33" r="1.61" fill="#fefeff"/><circle cx="7.30" cy="12.99" r="1.61" fill="#fefeff"/><circle cx="3.27" cy="11.33" r="1.61" fill="#fefeff"/><circle cx="1.61" cy="7.30" r="1.61" fill="#fefeff"/><circle cx="3.27" cy="3.27" r="1.61" fill="#fefeff"/><circle cx="7.30" cy="1.61" r="1.61" fill="#fefeff"/><circle cx="11.33" cy="3.27" r="1.61" fill="#fefeff"/><circle cx="7.3" cy="7.3" r="2.92" fill="#3c404b"/></svg>
<div class="a" style="left:788px;top:587px;width:166px;height:30px;background:#3c404b;border-radius:4.5px;"></div>
<div class="t" style="left:788px;top:595.6px;width:166px;text-align:center;letter-spacing:0.25px">Studio Mode</div>
<div class="a" style="left:788px;top:621px;width:166px;height:30px;background:#3c404b;border-radius:4.5px;"></div>
<div class="t" style="left:788px;top:629.6px;width:166px;text-align:center;letter-spacing:0.25px">Settings</div>
<div class="a" style="left:788px;top:655px;width:166px;height:30px;background:#3c404b;border-radius:4.5px;"></div>
<div class="t" style="left:788px;top:663.6px;width:166px;text-align:center;letter-spacing:0.25px">Exit</div>
<div class="t" style="left:554px;top:698.2px;font-size:12px;letter-spacing:-0.08px">LIVE: 00:00:00</div>
<div class="t" style="left:665.7px;top:698.2px;font-size:12px;letter-spacing:-0.15px">REC: 00:00:00</div>
<div class="t" style="left:768px;top:698.2px;font-size:12px;">CPU: 0.0%, 30.00 fps</div>
<svg class="a" style="left:527px;top:694px" width="20" height="17" viewBox="0 0 20 17"><circle cx="10" cy="8.3" r="3.7" fill="#bdbdbd"/><path d="M5 3.8Q2.4 8.3 5 12.8M15 3.8Q17.6 8.3 15 12.8" fill="none" stroke="#bdbdbd" stroke-width="1.7"/><path d="M2.3 2Q-1.2 8.3 2.3 14.6M17.7 2Q21.2 8.3 17.7 14.6" fill="none" stroke="#bdbdbd" stroke-width="1.7"/><path d="M2.6 16L17.6 1.3" stroke="#1f212a" stroke-width="3.2"/><path d="M2.6 15.8L17.4 1.4" stroke="#bdbdbd" stroke-width="1.6" stroke-linecap="round"/></svg>
<svg class="a" style="left:642px;top:696px" width="14" height="14" viewBox="0 0 14 14"><circle cx="7" cy="7" r="5.1" fill="#bdbdbd"/><path d="M0.8 13.2L13.2 0.8" stroke="#1f212a" stroke-width="2.6"/><path d="M1.2 12.8L12.6 1.2" stroke="#bdbdbd" stroke-width="1.4" stroke-linecap="round"/></svg>
<div class="a" style="left:790px;top:659px;width:32px;height:32px;border:6.5px solid rgba(120,170,100,0.12);border-radius:5px;transform:rotate(45deg)"></div>
<div class="a" style="left:949px;top:703px;width:2px;height:2px;background:#9a9ca6;"></div>
<div class="a" style="left:946px;top:706px;width:2px;height:2px;background:#9a9ca6;"></div>
<div class="a" style="left:949px;top:706px;width:2px;height:2px;background:#9a9ca6;"></div>
<div class="a" style="left:943px;top:709px;width:2px;height:2px;background:#9a9ca6;"></div>
<div class="a" style="left:946px;top:709px;width:2px;height:2px;background:#9a9ca6;"></div>
<div class="a" style="left:949px;top:709px;width:2px;height:2px;background:#9a9ca6;"></div>
</body></html>
